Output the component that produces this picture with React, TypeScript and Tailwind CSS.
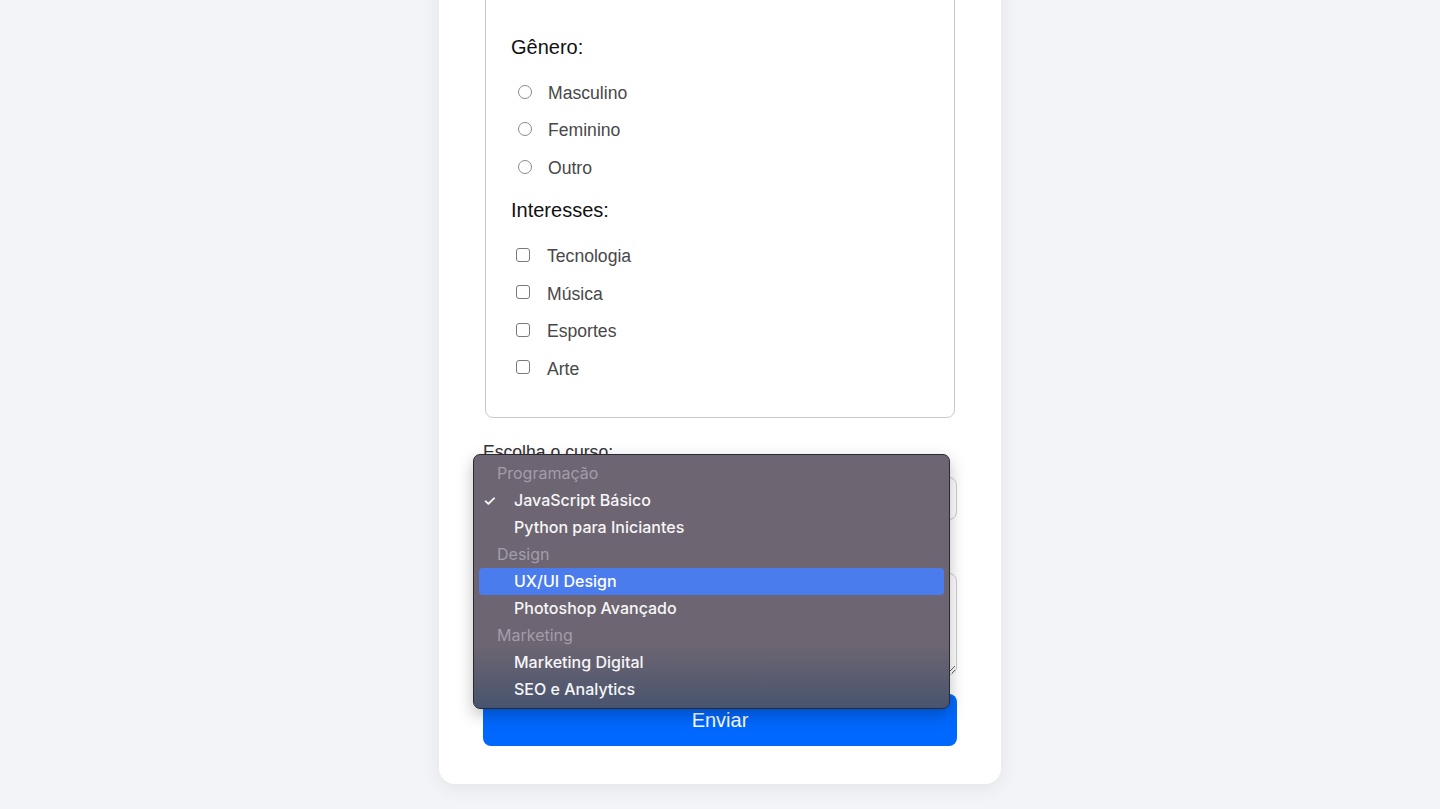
import React from "react";

const generos = ["Masculino", "Feminino", "Outro"];
const interesses = ["Tecnologia", "Música", "Esportes", "Arte"];

type Row = { label: string; group?: boolean; checked?: boolean; active?: boolean };

const cursoRows: Row[] = [
  { label: "Programação", group: true },
  { label: "JavaScript Básico", checked: true },
  { label: "Python para Iniciantes" },
  { label: "Design", group: true },
  { label: "UX/UI Design", active: true },
  { label: "Photoshop Avançado" },
  { label: "Marketing", group: true },
  { label: "Marketing Digital" },
  { label: "SEO e Analytics" },
];

// the native select popup, drawn open over the form
const CursoPopup = () => (
  <div className="absolute left-[-10px] top-[12px] z-10 w-[477px] rounded-[7px] border border-[#2b2a2e] bg-linear-to-b from-[#6d6571] from-75% to-[#48546e] px-[5px] py-[5px] shadow-[0_6px_16px_rgba(0,0,0,0.25)] font-['Inter','Noto_Sans',sans-serif]">
    {cursoRows.map((row) => (
      <div
        key={row.label}
        className={`relative flex h-[27px] items-center rounded-[4px] text-[16px] ${
          row.group
            ? "pl-[18px] text-[#a49da9] font-normal"
            : "pl-[35px] font-medium text-[#f7f6f8]"
        } ${row.active ? "bg-[#4b7ced] text-white" : ""}`}
      >
        {row.checked && (
          <span className="absolute left-[4px] top-[3px] text-[15px] text-white">✓</span>
        )}
        {row.label}
      </div>
    ))}
  </div>
);

export default function App() {
  return (
    <div className="min-h-screen bg-[#f3f4f8] flex justify-center pb-[25px] font-['Liberation_Sans',Arial,sans-serif]">
      <div className="-mt-[80px] w-[562px] rounded-2xl bg-white px-[44px] pt-[40px] pb-[36px] shadow-[0_4px_20px_rgba(0,0,0,0.07)]">
        <fieldset className="mx-[2px] rounded-lg border border-[#c9c9c9] px-[25px] pt-[75px] pb-[29px]">
          <h3 className="h-[22px] text-[20px] leading-[22px] text-[#111]">Gênero:</h3>
          <div className="mt-[16px] flex flex-col">
            {generos.map((g) => (
              <label key={g} className="flex h-[37.5px] items-center text-[17.6px] text-[#484848]">
                <span className="ml-[7px] -mt-[2px] h-[14px] w-[14px] shrink-0 rounded-full border border-[#8a8a8a] bg-white" />
                <span className="ml-[16px]">{g}</span>
              </label>
            ))}
          </div>
          <h3 className="mt-[12px] h-[22px] text-[20px] leading-[22px] text-[#111]">Interesses:</h3>
          <div className="mt-[17px] flex flex-col">
            {interesses.map((i) => (
              <label key={i} className="flex h-[37.5px] items-center text-[17.6px] text-[#484848]">
                <span className="ml-[5px] -mt-[3px] h-[14px] w-[14px] shrink-0 rounded-[3px] border border-[#7a7a7a] bg-white" />
                <span className="ml-[17px]">{i}</span>
              </label>
            ))}
          </div>
        </fieldset>

        <div className="relative mt-[24px]">
          <label className="block h-[20px] text-[17.6px] leading-[20px] text-[#333]">Escolha o curso:</label>
          <div className="relative mt-[15px] flex h-[43px] items-center rounded-lg border border-[#cccccc] bg-white px-3 text-[16px] text-[#222]">
            JavaScript Básico
            <svg className="absolute right-[6px] top-[15px]" width="8" height="12" viewBox="0 0 8 12" fill="none" stroke="#111" strokeWidth="1.5">
              <path d="M1 4 4 1 7 4M1 8l3 3 3-3" />
            </svg>
          </div>
          <CursoPopup />
        </div>

        <div className="mt-[18px]">
          <label className="block h-[20px] text-[17.6px] leading-[20px] text-[#333]">Mensagem:</label>
          <textarea className="mt-[15px] block h-[102px] w-full rounded-lg border border-[#cccccc] bg-white p-3 text-[16px]" />
        </div>

        <button className="mt-[19px] h-[52px] w-full rounded-lg bg-[#0068ff] text-[20px] text-white">
          Enviar
        </button>
      </div>
    </div>
  );
}
